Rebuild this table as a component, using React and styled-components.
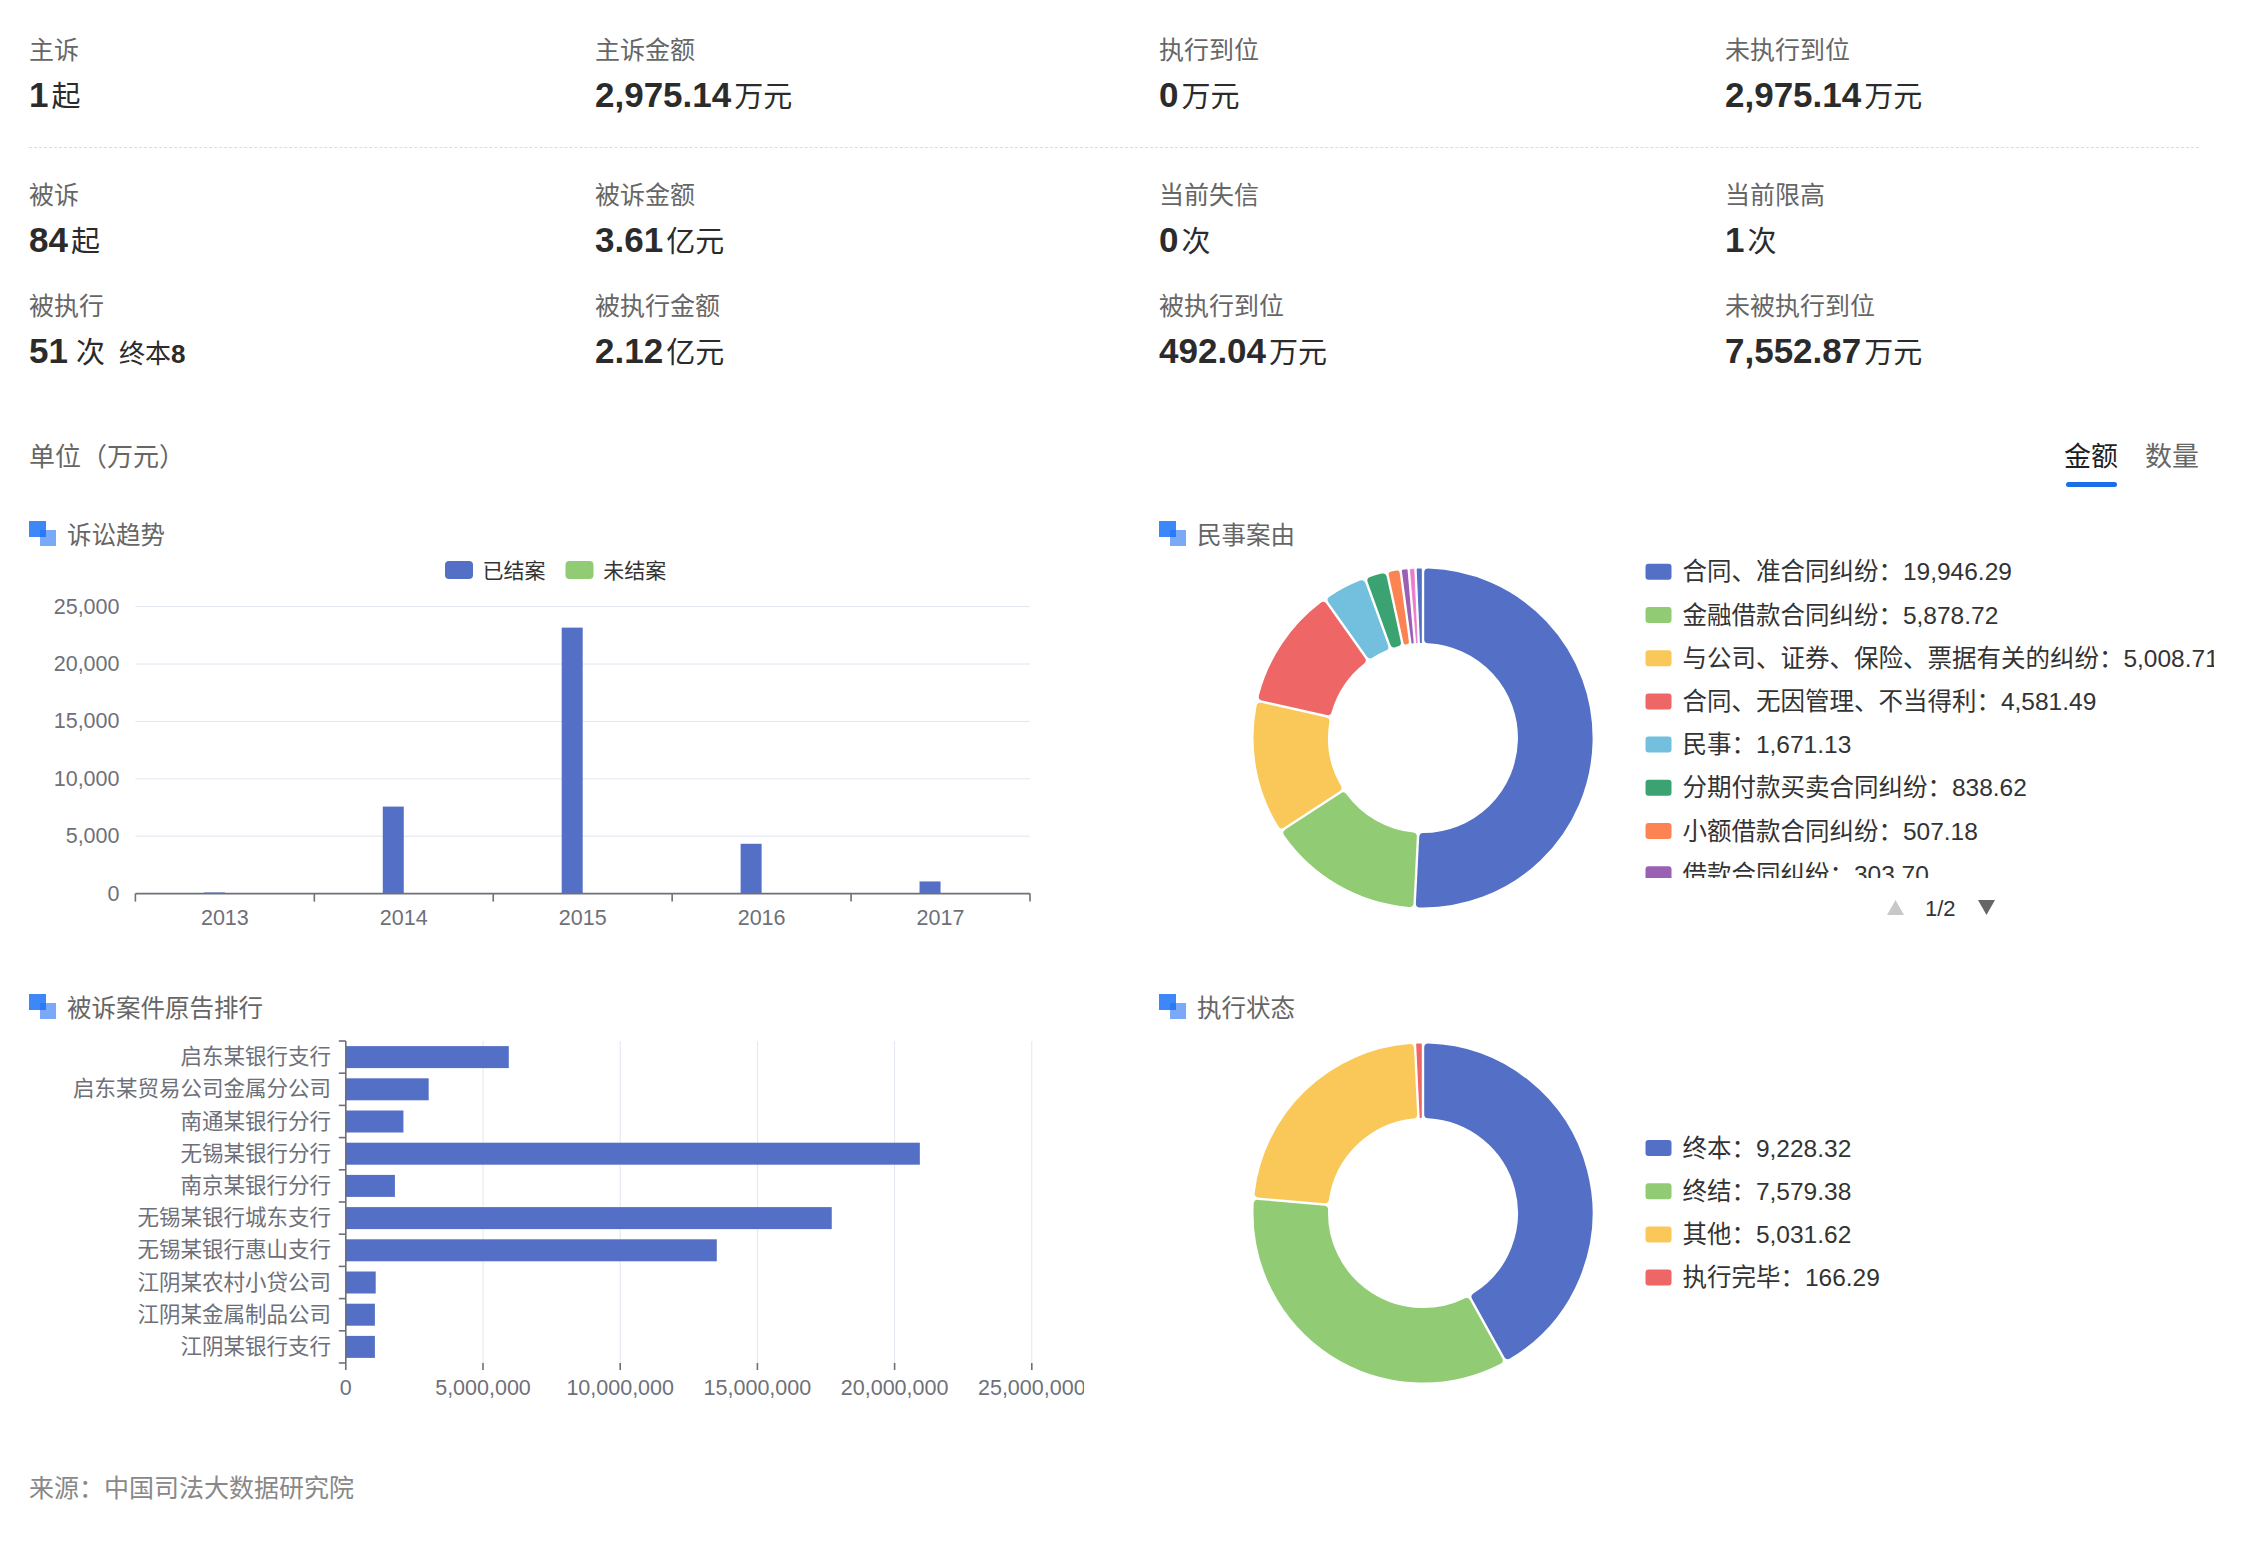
import React from 'react';
import styled, { createGlobalStyle } from 'styled-components';

const GlobalStyle = createGlobalStyle`
  html, body {
    margin: 0;
    padding: 0;
    background: #fff;
  }
  body {
    font-family: 'Liberation Sans', 'Noto Sans CJK SC', sans-serif;
    color: #333;
    overflow: hidden;
  }
  * {
    box-sizing: border-box;
  }
  svg text {
    font-family: 'Liberation Sans', 'Noto Sans CJK SC', sans-serif;
  }
`;

const palette = ['#5470c6', '#91cc75', '#fac858', '#ee6666', '#73c0de', '#3ba272', '#fc8452', '#9a60b4', '#ea7ccc'];

const Page = styled.div`
  width: 2244px;
  padding: 32px 45px 40px 29px;
`;

const StatGroup = styled.div`
  display: grid;
  grid-template-columns: 566px 564px 566px 1fr;
  row-gap: 24.5px;
  padding: ${(p) => (p.$first ? '0 0 29px' : '29px 0 0')};
  border-bottom: ${(p) => (p.$first ? '1px dashed #dcdcdc' : 'none')};
`;

const Stat = styled.div`
  display: flex;
  flex-direction: column;
  gap: 4px;
`;

const StatLabel = styled.div`
  font-size: 25px;
  line-height: 36px;
  color: #666;
`;

const StatValue = styled.div`
  display: flex;
  align-items: baseline;
  height: 46px;
  line-height: 46px;
  color: #2b2b2b;
  white-space: nowrap;
`;

const Num = styled.span`
  font-size: 35px;
  font-weight: 700;
`;

const Unit = styled.span`
  font-size: 29px;
  margin-left: ${(p) => (p.$spaced ? '8px' : '3px')};
`;

const Extra = styled.span`
  font-size: 26px;
  margin-left: 14px;

  b {
    font-weight: 700;
  }
`;

const UnitBar = styled.div`
  display: flex;
  justify-content: space-between;
  align-items: flex-start;
  margin-top: 65.5px;
`;

const UnitText = styled.div`
  font-size: 26px;
  line-height: 36px;
  color: #666;
`;

const Tabs = styled.div`
  display: flex;
  gap: 27px;
`;

const Tab = styled.div`
  display: flex;
  flex-direction: column;
  align-items: center;
  gap: 7px;
  font-size: 27px;
  line-height: 36px;
  color: ${(p) => (p.$active ? '#1f1f1f' : '#666')};
  cursor: pointer;
`;

const TabLine = styled.div`
  width: 51px;
  height: 5px;
  border-radius: 3px;
  background: ${(p) => (p.$active ? '#1c6dea' : 'transparent')};
`;

const ChartGrid = styled.div`
  display: grid;
  grid-template-columns: 1055px 1055px;
  column-gap: 75px;
  margin-top: 28px;
`;

const Panel = styled.section`
  display: flex;
  flex-direction: column;
  width: 1055px;
  overflow: hidden;
`;

const PanelTitle = styled.div`
  display: flex;
  align-items: center;
  gap: 11px;
  height: 36px;
  font-size: 24.5px;
  color: #666;
`;

const ChartSvg = styled.svg`
  display: block;
  overflow: hidden;
`;

const AxisText = styled.text`
  font-size: 21.5px;
  fill: #6e7079;
`;

const LegendText = styled.text`
  font-size: ${(p) => p.$size || 24.5}px;
  fill: #333;
`;

const Footer = styled.div`
  margin-top: 50px;
  font-size: 25px;
  line-height: 36px;
  color: #888;
`;

const TitleIcon = () => (
  <svg width="27" height="25" viewBox="0 0 27 25">
    <rect x="0" y="0" width="17" height="16" fill="#3d87f8" />
    <rect x="11" y="9" width="16" height="16" fill="#1f6ff2" opacity="0.6" />
  </svg>
);

const Title = ({ children }) => (
  <PanelTitle>
    <TitleIcon />
    <span>{children}</span>
  </PanelTitle>
);

// ring slice with rounded corners: inset polygon + fat round-join stroke
function sector(cx, cy, R, r, a0, a1, g = 1.2, cMax = 4) {
  const span = a1 - a0;
  let c = Math.min(cMax, (span * r - 2 * g) / 2 - 0.3);
  if (c < 0.2) c = 0.2;
  const Ro = R - c;
  const Ri = r + c;
  const dO = (c + g) / Ro;
  const dI = (c + g) / Ri;
  const p = (rad, a) => `${(cx + rad * Math.sin(a)).toFixed(2)} ${(cy - rad * Math.cos(a)).toFixed(2)}`;
  const large = span - 2 * dO > Math.PI ? 1 : 0;
  const largeI = span - 2 * dI > Math.PI ? 1 : 0;
  const d = `M ${p(Ro, a0 + dO)} A ${Ro} ${Ro} 0 ${large} 1 ${p(Ro, a1 - dO)} L ${p(Ri, a1 - dI)} A ${Ri} ${Ri} 0 ${largeI} 0 ${p(Ri, a0 + dI)} Z`;
  return { d, c };
}

const Donut = ({ cx, cy, items }) => {
  const total = items.reduce((s, it) => s + it.value, 0);
  let acc = 0;
  return (
    <g>
      {items.map((it, i) => {
        const a0 = (acc / total) * Math.PI * 2;
        acc += it.value;
        const a1 = (acc / total) * Math.PI * 2;
        const { d, c } = sector(cx, cy, 169.5, 95, a0, a1);
        return <path key={i} d={d} fill={it.color} stroke={it.color} strokeWidth={2 * c} strokeLinejoin="round" />;
      })}
    </g>
  );
};

const trend = [
  ['2013', 100],
  ['2014', 7580],
  ['2015', 23170],
  ['2016', 4340],
  ['2017', 1060],
];

const TrendChart = () => {
  const x0 = 135.4;
  const x1 = 1030;
  const y0 = 893.6;
  const step = 57.4;
  const cw = (x1 - x0) / trend.length;
  const ticks = ['0', '5,000', '10,000', '15,000', '20,000', '25,000'];
  return (
    <ChartSvg width="1055" height="437" viewBox="29 551 1055 437">
      <rect x="445" y="561" width="28" height="18" rx="4" fill={palette[0]} />
      <LegendText $size={21} x="482.6" y="570" dominantBaseline="central">已结案</LegendText>
      <rect x="565.5" y="561" width="28" height="18" rx="4" fill={palette[1]} />
      <LegendText $size={21} x="603.3" y="570" dominantBaseline="central">未结案</LegendText>

      {ticks.map((t, i) => (
        <g key={t}>
          {i > 0 && <line x1={x0} x2={x1} y1={y0 - step * i} y2={y0 - step * i} stroke="#e0e6f1" strokeWidth="1" />}
          <AxisText x="119.5" y={y0 - step * i} textAnchor="end" dominantBaseline="central">{t}</AxisText>
        </g>
      ))}

      {trend.map(([year, v], i) => {
        const c = x0 + cw * (i + 0.5);
        const h = (v / 5000) * step;
        return (
          <g key={year}>
            <rect x={c - 21} y={y0 - h} width="21" height={h} fill={palette[0]} />
            <AxisText x={c} y="918" textAnchor="middle" dominantBaseline="central">{year}</AxisText>
          </g>
        );
      })}

      <line x1={x0} x2={x1} y1={y0} y2={y0} stroke="#6e7079" strokeWidth="1.6" />
      {trend.concat([null]).map((_, i) => (
        <line key={i} x1={x0 + cw * i} x2={x0 + cw * i} y1={y0} y2={y0 + 8} stroke="#6e7079" strokeWidth="1.6" />
      ))}
    </ChartSvg>
  );
};

const plaintiffs = [
  ['启东某银行支行', 5940000],
  ['启东某贸易公司金属分公司', 3020000],
  ['南通某银行分行', 2100000],
  ['无锡某银行分行', 20920000],
  ['南京某银行分行', 1790000],
  ['无锡某银行城东支行', 17710000],
  ['无锡某银行惠山支行', 13520000],
  ['江阴某农村小贷公司', 1090000],
  ['江阴某金属制品公司', 1060000],
  ['江阴某银行支行', 1060000],
];

const PlaintiffChart = () => {
  const ax = 345.8;
  const per = 137.2;
  const top = 1041;
  const band = 32.2;
  const bottom = top + band * plaintiffs.length;
  const xt = ['0', '5,000,000', '10,000,000', '15,000,000', '20,000,000', '25,000,000'];
  return (
    <ChartSvg width="1055" height="396" viewBox="29 1024 1055 396">
      {xt.map((t, i) => (
        <g key={t}>
          {i > 0 && <line x1={ax + per * i} x2={ax + per * i} y1={top} y2={bottom} stroke="#e0e6f1" strokeWidth="1" />}
          <line x1={ax + per * i} x2={ax + per * i} y1={bottom} y2={bottom + 7} stroke="#6e7079" strokeWidth="1.6" />
          <AxisText x={ax + per * i} y="1388" textAnchor="middle" dominantBaseline="central">{t}</AxisText>
        </g>
      ))}

      {plaintiffs.map(([name, v], i) => {
        const y = top + band * i;
        return (
          <g key={name}>
            <rect x={ax} y={y + 5.1} width={(v / 5000000) * per} height="22" fill={palette[0]} />
            <AxisText x="331" y={y + band / 2} textAnchor="end" dominantBaseline="central">{name}</AxisText>
          </g>
        );
      })}

      <line x1={ax} x2={ax} y1={top} y2={bottom} stroke="#6e7079" strokeWidth="1.6" />
      {plaintiffs.concat([null]).map((_, i) => (
        <line key={i} x1={ax - 7} x2={ax} y1={top + band * i} y2={top + band * i} stroke="#6e7079" strokeWidth="1.6" />
      ))}
    </ChartSvg>
  );
};

const civilCauses = [
  { name: '合同、准合同纠纷', value: 19946.29, label: '19,946.29' },
  { name: '金融借款合同纠纷', value: 5878.72, label: '5,878.72' },
  { name: '与公司、证券、保险、票据有关的纠纷', value: 5008.71, label: '5,008.71' },
  { name: '合同、无因管理、不当得利', value: 4581.49, label: '4,581.49' },
  { name: '民事', value: 1671.13, label: '1,671.13' },
  { name: '分期付款买卖合同纠纷', value: 838.62, label: '838.62' },
  { name: '小额借款合同纠纷', value: 507.18, label: '507.18' },
  { name: '借款合同纠纷', value: 303.7, label: '303.70' },
  { name: '其他', value: 250, label: '250.00' },
  { name: '其他合同纠纷', value: 278, label: '278.00' },
].map((it, i) => ({ ...it, color: palette[i % palette.length] }));

const execStatus = [
  { name: '终本', value: 9228.32, label: '9,228.32' },
  { name: '终结', value: 7579.38, label: '7,579.38' },
  { name: '其他', value: 5031.62, label: '5,031.62' },
  { name: '执行完毕', value: 166.29, label: '166.29' },
].map((it, i) => ({ ...it, color: palette[i] }));

const Legend = ({ items, y0 }) => (
  <g>
    {items.map((it, i) => {
      const y = y0 + 43.2 * i;
      return (
        <g key={it.name + i}>
          <rect x="1645.5" y={y - 8} width="26" height="16" rx="3" fill={it.color} />
          <LegendText x="1682.4" y={y} dominantBaseline="central">{`${it.name}：${it.label}`}</LegendText>
        </g>
      );
    })}
  </g>
);

const CivilChart = () => (
  <ChartSvg width="1055" height="437" viewBox="1159 551 1055 437">
    <defs>
      <clipPath id="civil-legend">
        <rect x="1640" y="551" width="600" height="327" />
      </clipPath>
    </defs>
    <Donut cx={1423} cy={738} items={civilCauses} />
    <g clipPath="url(#civil-legend)">
      <Legend items={civilCauses.slice(0, 8)} y0={571.8} />
    </g>
    <polygon points="1887,915 1895.5,900 1904,915" fill="#c8c8c8" />
    <LegendText $size={22} x="1925" y="908" dominantBaseline="central">1/2</LegendText>
    <polygon points="1978,900 1995,900 1986.5,915" fill="#666" />
  </ChartSvg>
);

const ExecChart = () => (
  <ChartSvg width="1055" height="396" viewBox="1159 1024 1055 396">
    <Donut cx={1423} cy={1213} items={execStatus} />
    <Legend items={execStatus} y0={1148} />
  </ChartSvg>
);

const statsTop = [
  { label: '主诉', num: '1', unit: '起' },
  { label: '主诉金额', num: '2,975.14', unit: '万元' },
  { label: '执行到位', num: '0', unit: '万元' },
  { label: '未执行到位', num: '2,975.14', unit: '万元' },
];

const statsBottom = [
  { label: '被诉', num: '84', unit: '起' },
  { label: '被诉金额', num: '3.61', unit: '亿元' },
  { label: '当前失信', num: '0', unit: '次' },
  { label: '当前限高', num: '1', unit: '次' },
  { label: '被执行', num: '51', unit: '次', spaced: true, extra: '终本', extraNum: '8' },
  { label: '被执行金额', num: '2.12', unit: '亿元' },
  { label: '被执行到位', num: '492.04', unit: '万元' },
  { label: '未被执行到位', num: '7,552.87', unit: '万元' },
];

const StatItem = ({ s }) => (
  <Stat>
    <StatLabel>{s.label}</StatLabel>
    <StatValue>
      <Num>{s.num}</Num>
      <Unit $spaced={s.spaced}>{s.unit}</Unit>
      {s.extra && (
        <Extra>
          {s.extra}
          <b>{s.extraNum}</b>
        </Extra>
      )}
    </StatValue>
  </Stat>
);

const App = () => {
  return (
    <Page>
      <GlobalStyle />
      <StatGroup $first>
        {statsTop.map((s) => (
          <StatItem key={s.label} s={s} />
        ))}
      </StatGroup>
      <StatGroup>
        {statsBottom.map((s) => (
          <StatItem key={s.label} s={s} />
        ))}
      </StatGroup>

      <UnitBar>
        <UnitText>单位（万元）</UnitText>
        <Tabs>
          <Tab $active>
            金额
            <TabLine $active />
          </Tab>
          <Tab>
            数量
            <TabLine />
          </Tab>
        </Tabs>
      </UnitBar>

      <ChartGrid>
        <Panel>
          <Title>诉讼趋势</Title>
          <TrendChart />
        </Panel>
        <Panel>
          <Title>民事案由</Title>
          <CivilChart />
        </Panel>
        <Panel>
          <Title>被诉案件原告排行</Title>
          <PlaintiffChart />
        </Panel>
        <Panel>
          <Title>执行状态</Title>
          <ExecChart />
        </Panel>
      </ChartGrid>

      <Footer>来源：中国司法大数据研究院</Footer>
    </Page>
  );
};

export default App;
